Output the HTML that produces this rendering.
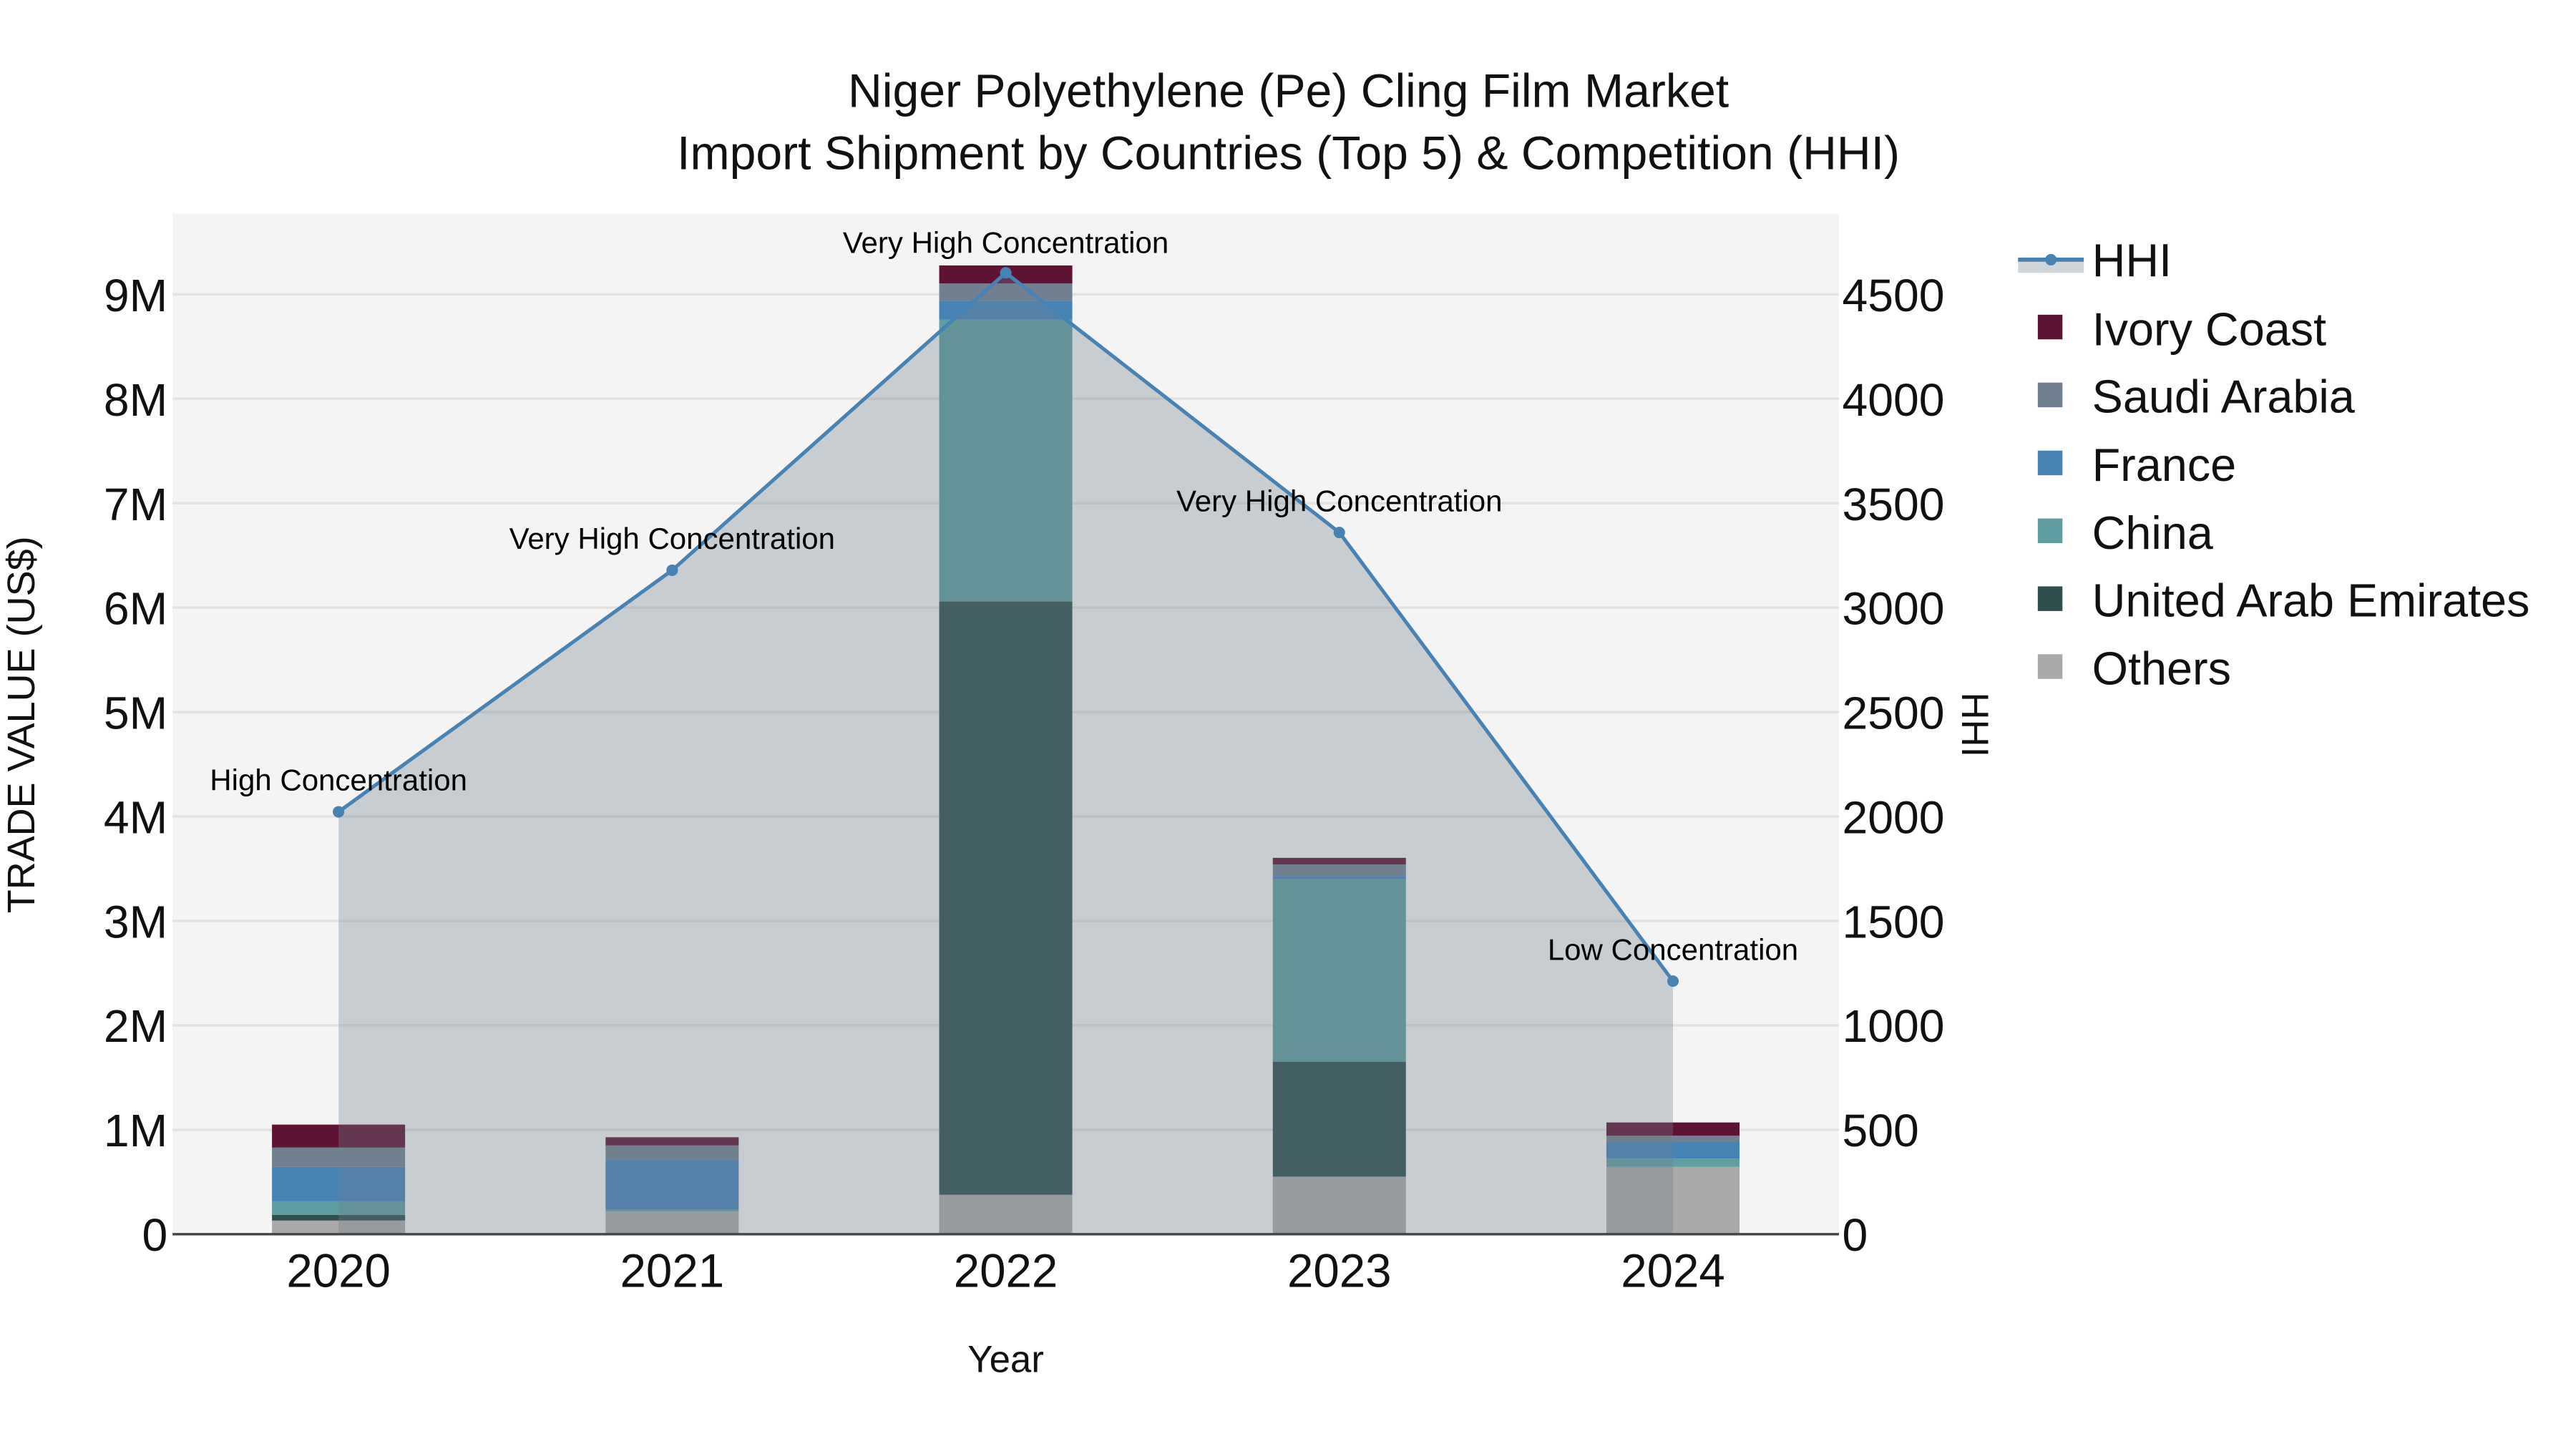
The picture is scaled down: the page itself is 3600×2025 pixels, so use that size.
<!DOCTYPE html>
<html><head><meta charset="utf-8"><style>
html,body{margin:0;padding:0;background:#fff;}
svg{display:block;}
text{font-family:"Liberation Sans",sans-serif;}
</style></head><body>
<svg width="3600" height="2025" viewBox="0 0 1567.5 881.7" xmlns="http://www.w3.org/2000/svg">
<rect x="0" y="0" width="1567.5" height="881.7" fill="#fff"/>
<rect x="105" y="130" width="1014" height="621" fill="#f4f4f4"/>
<g stroke="#e2e2e2" stroke-width="1.5">
<line x1="105" x2="1119" y1="687.5" y2="687.5"/>
<line x1="105" x2="1119" y1="623.9" y2="623.9"/>
<line x1="105" x2="1119" y1="560.4" y2="560.4"/>
<line x1="105" x2="1119" y1="496.8" y2="496.8"/>
<line x1="105" x2="1119" y1="433.3" y2="433.3"/>
<line x1="105" x2="1119" y1="369.7" y2="369.7"/>
<line x1="105" x2="1119" y1="306.2" y2="306.2"/>
<line x1="105" x2="1119" y1="242.6" y2="242.6"/>
<line x1="105" x2="1119" y1="179.1" y2="179.1"/>
</g>
<g>
<rect x="165.5" y="742.7" width="81" height="8.3" fill="#a9a9a9"/>
<rect x="165.5" y="739.2" width="81" height="3.5" fill="#2f4f4f"/>
<rect x="165.5" y="731" width="81" height="8.2" fill="#5f9ea0"/>
<rect x="165.5" y="710.1" width="81" height="20.9" fill="#4682b4"/>
<rect x="165.5" y="698.3" width="81" height="11.8" fill="#708090"/>
<rect x="165.5" y="684.3" width="81" height="14" fill="#5f1334"/>

<rect x="368.5" y="737" width="81" height="14" fill="#a9a9a9"/>
<rect x="368.5" y="736" width="81" height="1" fill="#5f9ea0"/>
<rect x="368.5" y="706" width="81" height="30" fill="#4682b4"/>
<rect x="368.5" y="697" width="81" height="9" fill="#708090"/>
<rect x="368.5" y="692" width="81" height="5" fill="#5f1334"/>

<rect x="571.5" y="727" width="81" height="24" fill="#a9a9a9"/>
<rect x="571.5" y="366" width="81" height="361" fill="#2f4f4f"/>
<rect x="571.5" y="194.5" width="81" height="171.5" fill="#5f9ea0"/>
<rect x="571.5" y="183" width="81" height="11.5" fill="#4682b4"/>
<rect x="571.5" y="172.5" width="81" height="10.5" fill="#708090"/>
<rect x="571.5" y="161.5" width="81" height="11" fill="#5f1334"/>

<rect x="774.5" y="716" width="81" height="35" fill="#a9a9a9"/>
<rect x="774.5" y="646" width="81" height="70" fill="#2f4f4f"/>
<rect x="774.5" y="535" width="81" height="111" fill="#5f9ea0"/>
<rect x="774.5" y="533" width="81" height="2" fill="#4682b4"/>
<rect x="774.5" y="526" width="81" height="7" fill="#708090"/>
<rect x="774.5" y="522" width="81" height="4" fill="#5f1334"/>

<rect x="977.5" y="710" width="81" height="41" fill="#a9a9a9"/>
<rect x="977.5" y="705" width="81" height="5" fill="#5f9ea0"/>
<rect x="977.5" y="694.5" width="81" height="10.5" fill="#4682b4"/>
<rect x="977.5" y="691" width="81" height="3.5" fill="#708090"/>
<rect x="977.5" y="683" width="81" height="8" fill="#5f1334"/>
</g>
<polygon points="206,494 409,347 612,166 815,324 1018,597 1018,751 206,751" fill="#708090" fill-opacity="0.33"/>
<line x1="105" x2="1119" y1="751" y2="751" stroke="#444" stroke-width="1.5"/>
<polyline points="206,494 409,347 612,166 815,324 1018,597" fill="none" stroke="#4682b4" stroke-width="2.2"/>
<g fill="#4682b4">
<circle cx="206" cy="494" r="3.5"/><circle cx="409" cy="347" r="3.5"/><circle cx="612" cy="166" r="3.5"/><circle cx="815" cy="324" r="3.5"/><circle cx="1018" cy="597" r="3.5"/>
</g>
<g font-size="18.3" text-anchor="middle" fill="#000">
<text x="206" y="481">High Concentration</text>
<text x="409" y="334">Very High Concentration</text>
<text x="612" y="154">Very High Concentration</text>
<text x="815" y="311">Very High Concentration</text>
<text x="1018" y="584">Low Concentration</text>
</g>
<g font-size="28.8" text-anchor="middle" fill="#111">
<text x="784" y="65">Niger Polyethylene (Pe) Cling Film Market</text>
<text x="784" y="103">Import Shipment by Countries (Top 5) &amp; Competition (HHI)</text>
</g>
<g font-size="28" text-anchor="end" fill="#111">
<text x="102" y="761">0</text>
<text x="102" y="697.5">1M</text>
<text x="102" y="634">2M</text>
<text x="102" y="570.5">3M</text>
<text x="102" y="507">4M</text>
<text x="102" y="443.5">5M</text>
<text x="102" y="380">6M</text>
<text x="102" y="316.5">7M</text>
<text x="102" y="253">8M</text>
<text x="102" y="189.5">9M</text>
</g>
<g font-size="28" text-anchor="start" fill="#111">
<text x="1121" y="761">0</text>
<text x="1121" y="697.5">500</text>
<text x="1121" y="634">1000</text>
<text x="1121" y="570.5">1500</text>
<text x="1121" y="507">2000</text>
<text x="1121" y="443.5">2500</text>
<text x="1121" y="380">3000</text>
<text x="1121" y="316.5">3500</text>
<text x="1121" y="253">4000</text>
<text x="1121" y="189.5">4500</text>
</g>
<g font-size="28.5" text-anchor="middle" fill="#111">
<text x="206" y="783">2020</text>
<text x="409" y="783">2021</text>
<text x="612" y="783">2022</text>
<text x="815" y="783">2023</text>
<text x="1018" y="783">2024</text>
</g>
<text x="612" y="835" font-size="23" text-anchor="middle" fill="#111">Year</text>
<text transform="translate(21,441) rotate(-90)" font-size="23.5" text-anchor="middle" fill="#111">TRADE VALUE (US$)</text>
<text transform="translate(1194,441) rotate(90)" font-size="23" text-anchor="middle" fill="#111">HHI</text>
<rect x="1228" y="158" width="40" height="8" fill="#708090" fill-opacity="0.33"/>
<line x1="1228" x2="1268" y1="158" y2="158" stroke="#4682b4" stroke-width="2.5"/>
<circle cx="1248" cy="158" r="3.5" fill="#4682b4"/>
<rect x="1240" y="191.5" width="15" height="15" fill="#5f1334"/>
<rect x="1240" y="232.8" width="15" height="15" fill="#708090"/>
<rect x="1240" y="274.2" width="15" height="15" fill="#4682b4"/>
<rect x="1240" y="315.5" width="15" height="15" fill="#5f9ea0"/>
<rect x="1240" y="356.8" width="15" height="15" fill="#2f4f4f"/>
<rect x="1240" y="398.1" width="15" height="15" fill="#a9a9a9"/>
<g font-size="28.2" fill="#111">
<text x="1273" y="168">HHI</text>
<text x="1273" y="210">Ivory Coast</text>
<text x="1273" y="251">Saudi Arabia</text>
<text x="1273" y="292.5">France</text>
<text x="1273" y="334">China</text>
<text x="1273" y="375">United Arab Emirates</text>
<text x="1273" y="416.5">Others</text>
</g>
</svg>
</body></html>
